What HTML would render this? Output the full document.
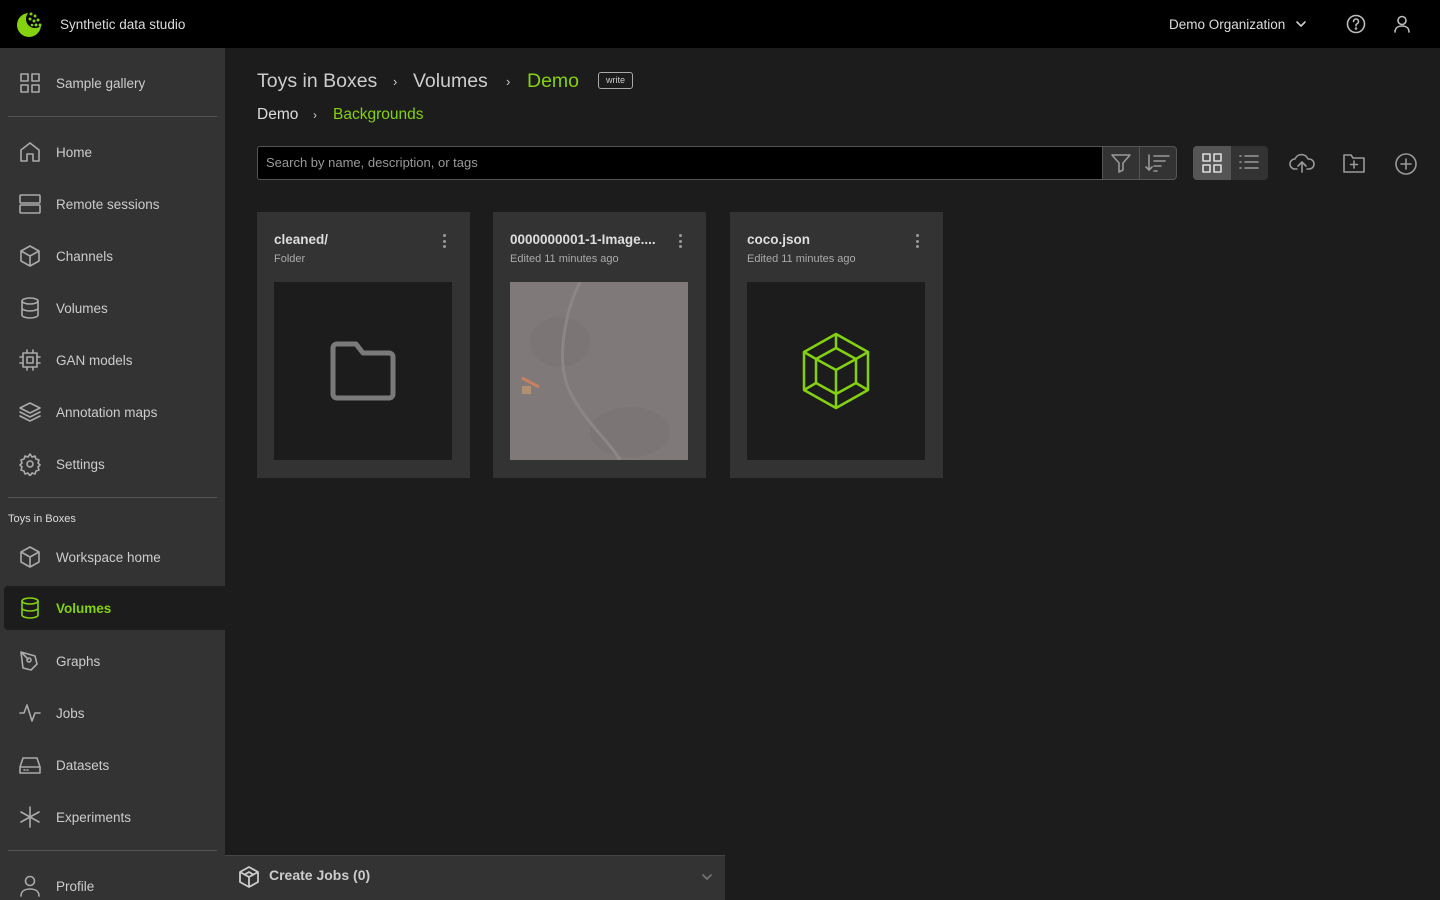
<!DOCTYPE html>
<html><head><meta charset="utf-8"><style>
*{margin:0;padding:0;box-sizing:border-box}
html,body{width:1440px;height:900px;overflow:hidden}
body{background:#1c1c1c;font-family:"Liberation Sans",sans-serif;color:#ddd;position:relative}
.top{position:absolute;left:0;top:0;width:1440px;height:48px;background:#000}
.side{position:absolute;left:0;top:48px;width:225px;height:852px;background:#333}
.it{position:absolute;left:4px;width:221px;height:44px;display:flex;align-items:center;font-size:13.5px;color:#ccc}
.it svg{position:absolute;left:14px;width:24px;height:24px;fill:none;stroke:#aaa;stroke-width:1.6;stroke-linecap:round;stroke-linejoin:round}
.it span{position:absolute;left:52px}
.div{position:absolute;left:8px;width:209px;height:1px;background:#555}
.abs{position:absolute;white-space:nowrap}
.card{position:absolute;top:212px;width:213px;height:266px;background:#333}
.card .t{position:absolute;left:17px;top:20px;font-size:13.5px;font-weight:bold;color:#ddd}
.card .s{position:absolute;left:17px;top:41px;font-size:11px;color:#aaa}
.card .d{position:absolute;right:24px;top:22px;width:3px}
.card .d i{display:block;width:3px;height:3px;border-radius:50%;background:#999;margin-bottom:2.5px}
.card .im{position:absolute;left:17px;top:70px;width:178px;height:178px;background:#1c1c1c;display:flex;align-items:center;justify-content:center}
.ic{stroke:#999;fill:none;stroke-width:1.6;stroke-linecap:round;stroke-linejoin:round}
.bc{font-size:20px;color:#ccc}
</style></head><body>
<div class="top">
 <svg class="abs" style="left:16px;top:10px" width="30" height="30" viewBox="0 0 30 30"><circle cx="13" cy="15" r="12" fill="#84d10f"/><circle cx="19" cy="9" r="9" fill="#000"/><g fill="#84d10f"><circle cx="15" cy="4" r="1.5"/><circle cx="19" cy="6" r="1.5"/><circle cx="14" cy="9" r="1.5"/><circle cx="18" cy="11" r="1.5"/><circle cx="22" cy="10" r="1.5"/><circle cx="20" cy="15" r="1.5"/><circle cx="24" cy="15" r="1.5"/><circle cx="16" cy="15" r="1.3"/></g></svg>
 <div class="abs" style="left:60px;top:17px;font-size:13.5px;color:#ddd">Synthetic data studio</div>
 <div class="abs" style="left:1169px;top:17px;font-size:13.5px;color:#ddd">Demo Organization</div>
 <svg class="abs ic" style="left:1295px;top:18px;stroke:#ccc" width="12" height="12" viewBox="0 0 12 12"><path d="M2 4l4 4 4-4"/></svg>
 <svg class="abs ic" style="left:1346px;top:14px;stroke:#bbb" width="20" height="20" viewBox="0 0 20 20"><circle cx="10" cy="10" r="8.5"/><path d="M7.5 7.5a2.5 2.5 0 1 1 3.5 2.3c-.7.3-1 .8-1 1.5v.5"/><circle cx="10" cy="14.5" r=".5"/></svg>
 <svg class="abs ic" style="left:1392px;top:14px;stroke:#bbb" width="20" height="20" viewBox="0 0 20 20"><circle cx="10" cy="6.5" r="4"/><path d="M3 18c0-4 3-6 7-6s7 2 7 6"/></svg>
</div>
<div class="side">
 <div class="it" style="top:13px"><svg viewBox="0 0 24 24"><rect x="3" y="3" width="7" height="7"/><rect x="14" y="3" width="7" height="7"/><rect x="3" y="14" width="7" height="7"/><rect x="14" y="14" width="7" height="7"/></svg><span>Sample gallery</span></div>
 <div class="div" style="top:68px"></div>
 <div class="it" style="top:82px"><svg viewBox="0 0 24 24"><path d="M3 10l9-7 9 7v11H15v-7H9v7H3z"/></svg><span>Home</span></div>
 <div class="it" style="top:134px"><svg viewBox="0 0 24 24"><rect x="2" y="3" width="20" height="8" rx="1"/><rect x="2" y="13" width="20" height="8" rx="1"/></svg><span>Remote sessions</span></div>
 <div class="it" style="top:186px"><svg viewBox="0 0 24 24"><path d="M12 2l9 5v10l-9 5-9-5V7z M3 7l9 5 9-5 M12 12v10"/></svg><span>Channels</span></div>
 <div class="it" style="top:238px"><svg viewBox="0 0 24 24"><ellipse cx="12" cy="5" rx="8" ry="3"/><path d="M4 5v14c0 1.7 3.6 3 8 3s8-1.3 8-3V5 M4 12c0 1.7 3.6 3 8 3s8-1.3 8-3"/></svg><span>Volumes</span></div>
 <div class="it" style="top:290px"><svg viewBox="0 0 24 24"><rect x="5" y="5" width="14" height="14"/><rect x="9" y="9" width="6" height="6"/><path d="M9 2v3M15 2v3M9 19v3M15 19v3M2 9h3M2 15h3M19 9h3M19 15h3"/></svg><span>GAN models</span></div>
 <div class="it" style="top:342px"><svg viewBox="0 0 24 24"><path d="M12 3l10 5-10 5L2 8z M2 12l10 5 10-5 M2 16l10 5 10-5"/></svg><span>Annotation maps</span></div>
 <div class="it" style="top:394px"><svg viewBox="0 0 24 24"><circle cx="12" cy="12" r="3"/><path d="M12 2l2 3 3-1 1 3 3 1-1 3 2 2-2 2 1 3-3 1-1 3-3-1-2 3-2-3-3 1-1-3-3-1 1-3-2-2 2-2-1-3 3-1 1-3 3 1z"/></svg><span>Settings</span></div>
 <div class="div" style="top:449px"></div>
 <div class="abs" style="left:8px;top:465px;font-size:11px;color:#ddd">Toys in Boxes</div>
 <div class="it" style="top:487px"><svg viewBox="0 0 24 24"><path d="M12 2l9 5v10l-9 5-9-5V7z M3 7l9 5 9-5 M12 12v10"/></svg><span>Workspace home</span></div>
 <div class="it" style="top:538px;background:#1c1c1c;border-radius:4px 0 0 4px;color:#84d10f;font-weight:bold"><svg viewBox="0 0 24 24" style="stroke:#84d10f"><ellipse cx="12" cy="5" rx="8" ry="3"/><path d="M4 5v14c0 1.7 3.6 3 8 3s8-1.3 8-3V5 M4 12c0 1.7 3.6 3 8 3s8-1.3 8-3"/></svg><span>Volumes</span></div>
 <div class="it" style="top:591px"><svg viewBox="0 0 24 24"><path d="M3 3l14 4 2 8-6 6-8-2z M3 3l7 7"/><circle cx="11" cy="11" r="2"/></svg><span>Graphs</span></div>
 <div class="it" style="top:643px"><svg viewBox="0 0 24 24"><path d="M2 12h4l3-8 5 16 3-8h5"/></svg><span>Jobs</span></div>
 <div class="it" style="top:695px"><svg viewBox="0 0 24 24"><path d="M2 14l3-9h14l3 9v6H2z M2 14h20"/><path d="M6 17h1M9 17h1"/></svg><span>Datasets</span></div>
 <div class="it" style="top:747px"><svg viewBox="0 0 24 24"><path d="M12 2v20M3 7l18 10M3 17L21 7"/></svg><span>Experiments</span></div>
 <div class="div" style="top:802px"></div>
 <div class="it" style="top:816px"><svg viewBox="0 0 24 24"><circle cx="12" cy="7" r="4.5"/><path d="M3 22c0-5 4-7 9-7s9 2 9 7"/></svg><span>Profile</span></div>
</div>

<div class="abs bc" style="left:257px;top:70px;font-size:19.5px">Toys in Boxes</div>
<div class="abs bc" style="left:393px;top:74px;font-size:13px">›</div>
<div class="abs bc" style="left:413px;top:70px;font-size:19.5px">Volumes</div>
<div class="abs bc" style="left:506px;top:74px;font-size:13px">›</div>
<div class="abs bc" style="left:527px;top:70px;font-size:19.5px;color:#84d10f">Demo</div>
<div class="abs" style="left:598px;top:72px;width:35px;height:17px;border:1px solid #aaa;border-radius:3px;font-size:9px;color:#ccc;text-align:center;line-height:15px">write</div>
<div class="abs" style="left:257px;top:106px;font-size:15.5px;color:#ddd">Demo</div>
<div class="abs" style="left:313px;top:108px;font-size:12px;color:#ccc">›</div>
<div class="abs" style="left:333px;top:106px;font-size:15.5px;color:#84d10f">Backgrounds</div>

<div class="abs" style="left:257px;top:146px;width:846px;height:34px;background:#000;border:1px solid #555;border-radius:3px 0 0 3px;font-size:13px;color:#999;padding:8px 8px">Search by name, description, or tags</div>
<div class="abs" style="left:1102px;top:146px;width:75px;height:34px;background:#333;border:1px solid #555;border-radius:0 4px 4px 0"></div>
<div class="abs" style="left:1139px;top:147px;width:1px;height:32px;background:#555"></div>
<svg class="abs ic" style="left:1110px;top:152px" width="22" height="22" viewBox="0 0 22 22"><path d="M2 3h18l-7 8v7l-4 2v-9z"/></svg>
<svg class="abs ic" style="left:1145px;top:152px" width="26" height="22" viewBox="0 0 26 22"><path d="M4 3v15M1 15l3 3 3-3M9 4h15M9 9h11M9 14h7M9 19h3"/></svg>
<div class="abs" style="left:1193px;top:146px;width:75px;height:34px;background:#333;border-radius:4px"></div>
<div class="abs" style="left:1193px;top:146px;width:38px;height:34px;background:#555;border-radius:4px 0 0 4px"></div>
<svg class="abs ic" style="left:1201px;top:152px;stroke:#ddd" width="22" height="22" viewBox="0 0 22 22"><rect x="2" y="2" width="7" height="7"/><rect x="13" y="2" width="7" height="7"/><rect x="2" y="13" width="7" height="7"/><rect x="13" y="13" width="7" height="7"/></svg>
<svg class="abs ic" style="left:1238px;top:152px" width="22" height="22" viewBox="0 0 22 22"><path d="M2 4h1M7 4h13M2 10h1M7 10h13M2 16h1M7 16h13"/></svg>
<svg class="abs ic" style="left:1289px;top:151px" width="26" height="24" viewBox="0 0 26 24"><path d="M8 18H6a5 5 0 0 1 0-10 7 7 0 0 1 13 0h1a5 5 0 0 1 0 10h-2M13 21v-9M9 15l4-4 4 4"/></svg>
<svg class="abs ic" style="left:1342px;top:152px" width="24" height="22" viewBox="0 0 24 22"><path d="M2 3h7l2 3h11v14H2z M12 9v7M8.5 12.5h7"/></svg>
<svg class="abs ic" style="left:1394px;top:152px" width="24" height="24" viewBox="0 0 24 24"><circle cx="12" cy="12" r="10"/><path d="M12 7v10M7 12h10"/></svg>

<div class="card" style="left:257px"><div class="t">cleaned/</div><div class="s">Folder</div><div class="d"><i></i><i></i><i></i></div>
 <div class="im"><svg width="66" height="60" viewBox="0 0 66 60" style="fill:none;stroke:#7a7a7a;stroke-width:5;stroke-linejoin:round"><path d="M3 7a4 4 0 0 1 4-4h19l7 9h26a4 4 0 0 1 4 4v37a4 4 0 0 1-4 4H7a4 4 0 0 1-4-4z"/></svg></div></div>
<div class="card" style="left:493px"><div class="t">0000000001-1-Image....</div><div class="s">Edited 11 minutes ago</div><div class="d"><i></i><i></i><i></i></div>
 <div class="im" style="background:#7f7979"><svg width="178" height="178" viewBox="0 0 178 178" style="position:absolute;left:0;top:0"><ellipse cx="50" cy="60" rx="30" ry="25" fill="#7b7575"/><ellipse cx="120" cy="150" rx="40" ry="25" fill="#7b7575"/><path d="M70 0C55 30 45 80 60 110S100 160 110 178" stroke="#8c8684" stroke-width="3" fill="none"/><rect x="12" y="104" width="9" height="8" fill="#b09070"/><path d="M12 96l17 9" stroke="#c88060" stroke-width="3"/></svg></div></div>
<div class="card" style="left:730px"><div class="t">coco.json</div><div class="s">Edited 11 minutes ago</div><div class="d"><i></i><i></i><i></i></div>
 <div class="im"><svg width="70" height="78" viewBox="0 0 70 78" style="fill:none;stroke:#84d10f;stroke-width:2.5;stroke-linejoin:round"><path d="M35 2l32 18v38L35 76 3 58V20z"/><path d="M35 16l20 11v24L35 62 15 51V27z"/><path d="M35 2v14M67 20l-12 7M67 58l-12-7M35 76V62M3 58l12-7M3 20l12 7M15 27l20 11 20-11M35 38v24"/></svg></div></div>

<div class="abs" style="left:225px;top:855px;width:500px;height:45px;background:#333;border-top:1px solid #444"></div>
<svg class="abs" style="left:238px;top:865px;fill:none;stroke:#ccc;stroke-width:1.8;stroke-linejoin:round" width="22" height="24" viewBox="0 0 22 24"><path d="M11 2l9 5v10l-9 5-9-5V7z M2 7l9 5 9-5 M11 12v10 M6 10l5-3 5 3"/></svg>
<div class="abs" style="left:269px;top:867px;font-size:14px;font-weight:bold;color:#ccc">Create Jobs (0)</div>
<svg class="abs ic" style="left:701px;top:872px;stroke:#777" width="12" height="10" viewBox="0 0 12 10"><path d="M2 3l4 4 4-4"/></svg>
</body></html>
